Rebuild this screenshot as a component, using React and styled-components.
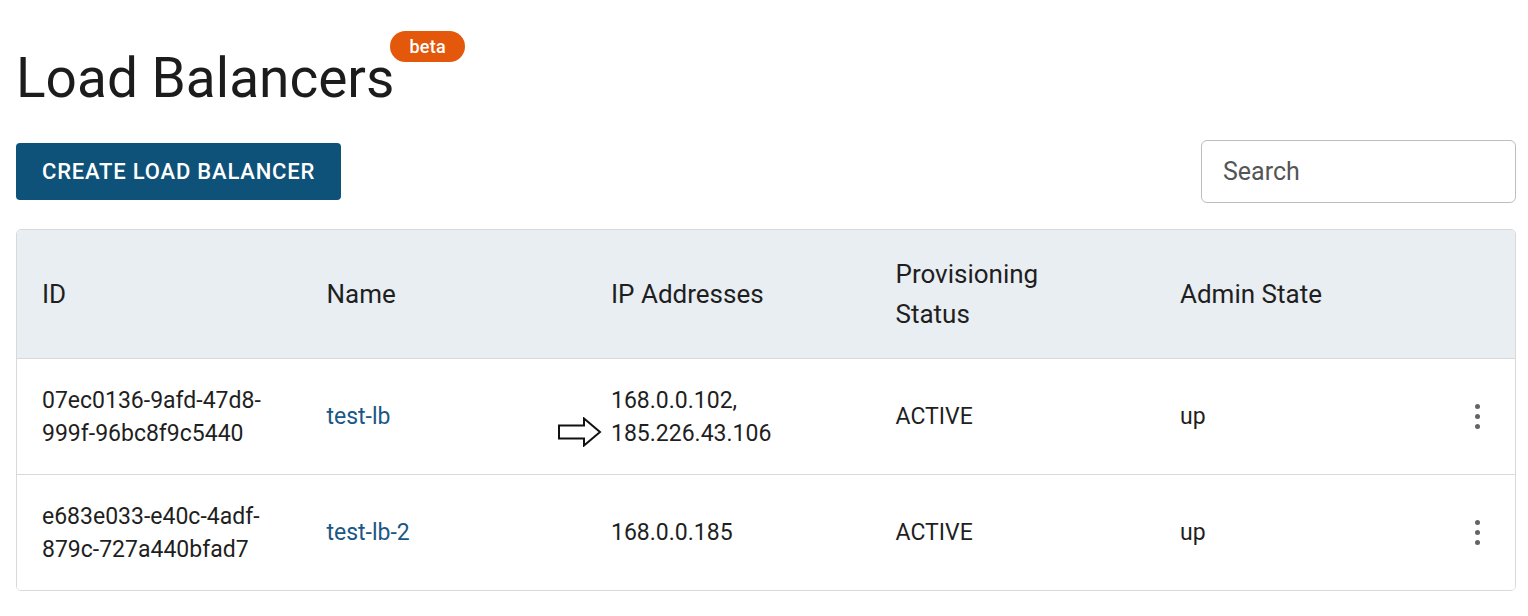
import React from "react";
import styled, { createGlobalStyle } from "styled-components";

const GlobalStyle = createGlobalStyle`
  body {
    margin: 0;
    background: #ffffff;
    font-family: Roboto, "Liberation Sans", sans-serif;
    color: #222;
  }
`;

const Page = styled.div`
  padding: 0 12px 0 16px;
`;

const TitleRow = styled.div`
  display: flex;
  align-items: flex-start;
  padding-top: 31px;
`;

const Title = styled.h1`
  margin: 19px 0 0;
  font-size: 55px;
  font-weight: 400;
  line-height: 56px;
  color: #1c1c1c;
`;

const Badge = styled.span`
  display: inline-flex;
  align-items: center;
  justify-content: center;
  height: 31px;
  padding: 0 19px;
  margin-left: -4px;
  border-radius: 16px;
  background: #e4580b;
  color: #fff;
  font-size: 18px;
  font-weight: 500;
  letter-spacing: 0.3px;
`;

const Toolbar = styled.div`
  display: flex;
  justify-content: space-between;
  align-items: center;
  margin-top: 34px;
`;

const PrimaryButton = styled.button`
  height: 57px;
  padding: 0 26px;
  border: none;
  border-radius: 4px;
  background: #0e5179;
  color: #fff;
  font-family: Roboto, "Liberation Sans", sans-serif;
  font-size: 22px;
  font-weight: 500;
  letter-spacing: 0.8px;
  text-transform: uppercase;
  cursor: pointer;
`;

const SearchInput = styled.input`
  box-sizing: border-box;
  width: 315px;
  height: 63px;
  padding: 0 21px;
  border: 1px solid #bdbdbd;
  border-radius: 6px;
  font-family: Roboto, "Liberation Sans", sans-serif;
  font-size: 25px;
  color: #222;
  outline: none;

  &::placeholder {
    color: #555;
  }
`;

const Table = styled.div`
  margin-top: 26px;
  border: 1px solid #d9d9d9;
  border-radius: 5px;
  overflow: hidden;
  font-size: 23px;
`;

const Row = styled.div`
  display: grid;
  grid-template-columns: 284.5px 284.5px 284.5px 284.5px 1fr 70px;
  align-items: center;
  padding-left: 25px;
  height: ${(p) => (p.$head ? "128px" : "115px")};
  background: ${(p) => (p.$head ? "#e9eef2" : "#fff")};
  border-top: ${(p) => (p.$first ? "none" : "1px solid #d9d9d9")};
  font-size: ${(p) => (p.$head ? "26px" : "23px")};
  line-height: ${(p) => (p.$head ? "40px" : "33px")};
`;

const Cell = styled.div`
  color: #1f1f1f;
`;

const IpCell = styled.div`
  position: relative;
  color: #1f1f1f;
`;

const Pointer = styled.svg`
  position: absolute;
  left: -54px;
  bottom: 3px;
`;

const NameLink = styled.a`
  color: #1a5785;
  text-decoration: none;
`;

const MenuButton = styled.button`
  justify-self: center;
  display: flex;
  flex-direction: column;
  gap: 5px;
  padding: 4px;
  margin-left: -6px;
  border: none;
  background: none;
  cursor: pointer;
`;

const Dot = styled.span`
  width: 5px;
  height: 5px;
  border-radius: 50%;
  background: #646464;
`;

const rows = [
  {
    id: ["07ec0136-9afd-47d8-", "999f-96bc8f9c5440"],
    name: "test-lb",
    ips: ["168.0.0.102,", "185.226.43.106"],
    arrow: true,
  },
  {
    id: ["e683e033-e40c-4adf-", "879c-727a440bfad7"],
    name: "test-lb-2",
    ips: ["168.0.0.185"],
  },
];

const Kebab = () => (
  <MenuButton aria-label="actions">
    <Dot />
    <Dot />
    <Dot />
  </MenuButton>
);

const App = () => (
  <>
    <GlobalStyle />
    <Page>
      <TitleRow>
        <Title>Load Balancers</Title>
        <Badge>beta</Badge>
      </TitleRow>
      <Toolbar>
        <PrimaryButton>Create Load Balancer</PrimaryButton>
        <SearchInput placeholder="Search" />
      </Toolbar>
      <Table>
        <Row $head $first>
          <Cell>ID</Cell>
          <Cell>Name</Cell>
          <Cell>IP Addresses</Cell>
          <Cell>
            Provisioning
            <br />
            Status
          </Cell>
          <Cell>Admin State</Cell>
          <Cell />
        </Row>
        {rows.map((r) => (
          <Row key={r.name}>
            <Cell>
              {r.id[0]}
              <br />
              {r.id[1]}
            </Cell>
            <Cell>
              <NameLink href="#">{r.name}</NameLink>
            </Cell>
            <IpCell>
              {r.arrow && (
                <Pointer width="46" height="30" viewBox="0 0 46 30">
                  <path
                    d="M2 8.5 H27 V1.5 L43 15 L27 28.5 V21.5 H2 Z"
                    fill="#fff"
                    stroke="#111"
                    strokeWidth="2"
                    strokeLinejoin="miter"
                  />
                </Pointer>
              )}
              {r.ips.map((ip, i) => (
                <div key={i}>{ip}</div>
              ))}
            </IpCell>
            <Cell>ACTIVE</Cell>
            <Cell>up</Cell>
            <Kebab />
          </Row>
        ))}
      </Table>
    </Page>
  </>
);

export default App;
